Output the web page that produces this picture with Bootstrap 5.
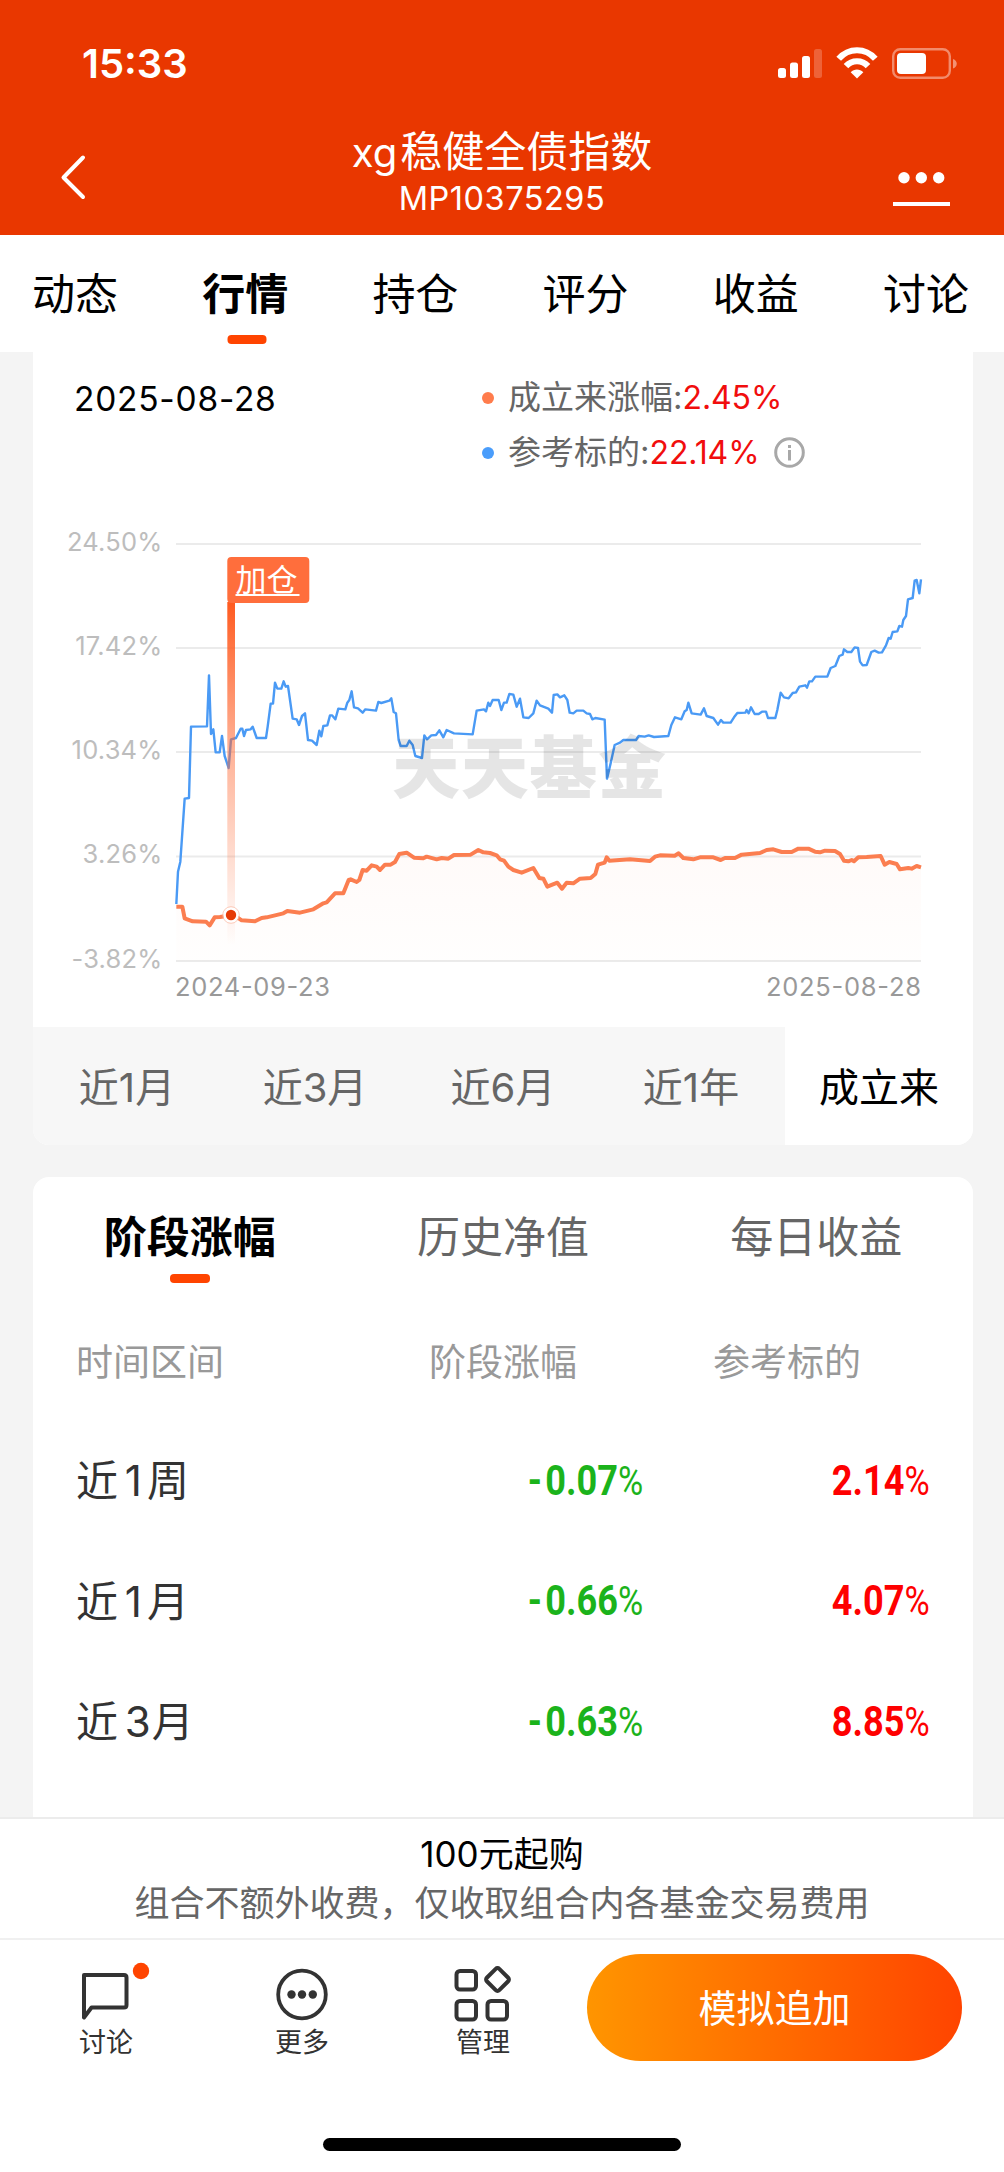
<!DOCTYPE html>
<html lang="zh-CN">
<head>
<meta charset="utf-8">
<meta name="viewport" content="width=device-width, initial-scale=1">
<title>xg稳健全债指数</title>
<link rel="stylesheet" href="https://cdn.jsdelivr.net/npm/bootstrap@5.3.0/dist/css/bootstrap.min.css">
<style>
body{font-family:Inter,"Noto Sans CJK SC",sans-serif;background:#f4f4f4;color:#000;line-height:1;width:1004px;height:2172px;overflow:hidden}
svg text{font-family:Inter,"Noto Sans CJK SC",sans-serif}
.app{height:2172px}
.topbar{height:235px;background:#e93700;color:#fff}
.statusbar{height:127px;padding:0 47px 0 82px}
.clock{font-size:40px;font-weight:600;line-height:128px}
.titlebar{height:108px;padding:0 54px 0 60px}
.fund-name{font-size:42px;line-height:50px}
.fund-name span{font-size:40px;margin-right:3px}
.fund-code{font-size:32.5px;line-height:38px;padding-top:2px;letter-spacing:.5px}
.maintabs{height:117px;padding:0 35px 0 32px;font-size:43px}
.tab-item{height:100%;line-height:118px;position:relative;white-space:nowrap}
.tab-on{font-weight:700}
.tab-on::after{content:"";position:absolute;left:50%;bottom:8px;width:39px;height:9px;border-radius:4px;background:#ff4400;transform:translateX(-50%)}
.maintabs .tab-on::after{margin-left:2px}
.content-area{height:1465px;padding:0 31px 0 33px;overflow:hidden}
.chart-card{height:793px;border-radius:0 0 16px 16px;overflow:hidden}
.chart-head{height:158px;padding:18px 40px 0 41px}
.cur-date{font-size:33.5px;line-height:58px;width:408px;letter-spacing:.75px}
.legend-row{height:55px;font-size:33px;color:#666}
.legend-row b{font-weight:400;color:#f10d0d;font-size:32px;letter-spacing:-.1px}
.legend-dot{width:12px;height:12px;border-radius:50%;margin-right:14px}
.dot-fund{background:#ff7c4c}.dot-ref{background:#4a9dfb}
.range-bar{height:118px;font-size:40px;color:#666;background:#f7f7f7;line-height:121px}
.range-on{background:#fff;color:#000}
.table-card{height:660px;margin-top:32px;border-radius:16px 16px 0 0}
.subtabs{height:120px;font-size:43px;color:#666}
.subtabs .tab-item{line-height:120px}
.subtabs .tab-on{color:#000}
.subtabs .tab-on::after{bottom:14px;width:40px}
.stage-head{height:124px;font-size:37px;color:#999;padding:6px 44px 0 43px}
.stage-row{height:120.5px;font-size:42px;color:#333;padding:0 44px 0 43px;word-spacing:-5px}
.day-num{letter-spacing:5px}
.day-wide{letter-spacing:1px}
.c-one{width:353px}.c-two{width:284px}
.stage-row .c-two{width:213px;text-align:right}
.rate{display:inline-block;font-family:Roboto,Inter,sans-serif;font-size:42px;line-height:52px;font-weight:700;transform:scaleX(.86);transform-origin:100% 50%;white-space:nowrap}
.minus{letter-spacing:4px}
.pct{font-weight:400;font-size:40px;letter-spacing:-1px}
.up{color:#fe0000}.down{color:#1bb31b}
.notice{height:121px;background:#fff;border-top:2px solid #ececec;font-size:35px;line-height:50px;padding-top:10px}
.notice-sub{color:#666;line-height:48px}
.actionbar{height:234px;background:#fff;border-top:2px solid #f0f0f0}
.act-row{height:138px;padding:14px 42px 0 60px}
.act{width:92px;color:#333;font-size:27px}
.act svg{display:block;margin:8px auto -1px}
.buy{width:375px;height:107px;border-radius:54px;border:0;background:linear-gradient(90deg,#ff9500,#ff4400);color:#fff;font-size:38px}
.homebar{width:358px;height:13px;border-radius:7px;background:#000;margin:60px auto 0}
</style>
<script src="https://cdn.jsdelivr.net/npm/bootstrap@5.3.0/dist/js/bootstrap.bundle.min.js"></script>
</head>
<body>
<div class="app d-flex flex-column">
<header class="topbar">
  <div class="statusbar d-flex justify-content-between">
    <div class="clock">15:33</div>
    <svg width="180" height="40" viewBox="777 43 180 40" style="margin-top:43px" fill="#fff">
      <rect x="778" y="68" width="8" height="10" rx="2.5"/><rect x="790" y="62.500" width="8" height="15.500" rx="2.500"/><rect x="802" y="56" width="8" height="22" rx="2.500"/><rect x="814" y="49" width="8" height="29" rx="2.500" opacity=".22"/>
      <g fill="none" stroke="#fff" stroke-width="6.200"><path d="M838.700 58.800c10-11.400 26.600-11.400 36.600 0M846 66.200c6-6.600 16-6.600 22 0"/></g>
      <path d="M850.700 72.200c3.500-3.600 9-3.600 12.600 0L857 78.400z"/>
      <rect x="893.200" y="49.200" width="56.600" height="28.600" rx="7" fill="none" stroke="#fff" stroke-width="2.400" opacity=".42"/><rect x="897" y="53" width="29" height="21" rx="4"/><path d="M953 59c5 1.500 5 8 0 9.500z" opacity=".45"/>
    </svg>
  </div>
  <div class="titlebar d-flex justify-content-between">
    <svg width="54" height="50" viewBox="60 152 54 50" style="margin-top:25px" fill="none" stroke="#fff" stroke-width="4" stroke-linecap="round" stroke-linejoin="round"><path d="M83 157.500 63.500 177.500l19.500 19.500"/></svg>
    <div class="text-center"><div class="fund-name"><span>xg</span>稳健全债指数</div><div class="fund-code">MP10375295</div></div>
    <svg width="60" height="40" viewBox="890 168 60 40" style="margin-top:41px" fill="#fff"><circle cx="904" cy="177.700" r="5.700"/><circle cx="921.300" cy="177.700" r="5.700"/><circle cx="938.700" cy="177.700" r="5.700"/><rect x="893" y="202" width="57" height="4"/></svg>
  </div>
</header>
<nav class="maintabs bg-white d-flex justify-content-between">
  <div class="tab-item">动态</div><div class="tab-item tab-on">行情</div><div class="tab-item">持仓</div><div class="tab-item">评分</div><div class="tab-item">收益</div><div class="tab-item">讨论</div>
</nav>
<main class="content-area">
  <section class="chart-card bg-white">
    <div class="chart-head d-flex">
      <div class="cur-date">2025-08-28</div>
      <div>
        <div class="legend-row d-flex align-items-center"><i class="legend-dot dot-fund"></i>成立来涨幅:<b>2.45%</b></div>
        <div class="legend-row d-flex align-items-center"><i class="legend-dot dot-ref"></i>参考标的:<b>22.14%</b>
          <svg width="31" height="31" viewBox="0 0 31 31" style="margin-left:14px" fill="none" stroke="#a8a8a8" stroke-width="3"><circle cx="15.500" cy="15.500" r="13.800"/><path d="M15.500 13v10.500M15.500 8v3"/></svg></div>
      </div>
    </div>
    <svg class="d-block" width="940" height="517" viewBox="33 510 940 517">
      <defs>
        <linearGradient id="pole" x1="0" y1="0" x2="0" y2="1"><stop offset="0" stop-color="#ff5a1f"/><stop offset=".45" stop-color="#ff6a35" stop-opacity=".5"/><stop offset="1" stop-color="#ff6a35" stop-opacity="0"/></linearGradient>
        <linearGradient id="area" x1="0" y1="0" x2="0" y2="1"><stop offset="0" stop-color="#ff7c4c" stop-opacity=".035"/><stop offset="1" stop-color="#ff7c4c" stop-opacity=".008"/></linearGradient>
      </defs>
      <path d="M176 544H921M176 648H921M176 752H921M176 856.500H921M176 961H921" stroke="#ebebeb" stroke-width="2"/>
      <g font-size="25.500" fill="#bdbdbd" text-anchor="end" letter-spacing=".2">
        <text x="162.500" y="550.500">24.50%</text><text x="162.500" y="654.500">17.42%</text><text x="162.500" y="759">10.34%</text><text x="162.500" y="863">3.26%</text><text x="162.500" y="967.500">-3.82%</text>
      </g>
      <g font-size="25.500" fill="#999"><text x="175" y="996" textLength="155">2024-09-23</text><text x="766" y="996" textLength="155">2025-08-28</text></g>
      <g transform="translate(150 520) scale(.33333)" fill="none" stroke-linejoin="round">
        <path fill="url(#area)" d="M79 1160 97 1160 104 1195 168 1205 243 1186 315 1204 412 1173 450 1178 520 1150 580 1120 638 1050 722 1034 748 1002 820 1015 895 1016 985 990 1040 1006 1115 1058 1150 1044 1236 1106 1322 1074 1364 1028 1586 1000 1712 1020 1870 988 2055 993 2082 1022 2192 1008 2250 1048 2313 1042V1323H79z"/>
        <polyline stroke="#4a9af5" stroke-width="7.200" points="79,1152 84,1055 91,1025 104,836 117,834 123,620 171,619 177,466 183,642 190,628 197,697 209,697 216,648 224,708 236,744 243,658 258,654 272,626 277,626 282,648 288,630 302,628 308,620 320,654 348,654 353,620 362,551 369,551 375,488 382,506 394,506 401,484 407,500 414,498 428,596 440,598 447,615 456,588 465,580 474,660 486,662 500,675 508,632 514,649 520,618 532,616 540,586 546,586 556,598 565,566 586,568 592,548 598,540 605,514 612,562 624,565 638,578 646,568 678,572 685,546 694,549 718,542 724,535 731,576 738,580 746,660 752,678 770,678 778,662 788,675 796,708 816,714 823,646 831,658 844,646 858,645 868,631 880,652 890,630 912,640 968,643 980,572 1002,568 1008,574 1015,548 1020,558 1028,540 1046,540 1054,570 1062,548 1070,548 1078,522 1090,524 1100,560 1110,536 1120,592 1136,594 1150,580 1160,542 1170,556 1195,566 1206,578 1211,525 1222,523 1230,532 1243,526 1252,540 1259,578 1270,580 1280,572 1300,572 1310,580 1320,582 1327,598 1336,594 1364,599 1371,776 1382,730 1394,675 1410,668 1420,660 1458,660 1466,648 1484,650 1496,646 1512,651 1555,648 1564,615 1575,592 1594,598 1604,574 1610,570 1615,548 1625,580 1652,584 1662,565 1670,588 1690,594 1704,614 1713,600 1720,608 1742,608 1752,592 1762,579 1786,578 1790,570 1796,580 1803,562 1814,582 1826,582 1836,575 1848,575 1854,594 1876,594 1882,570 1892,518 1902,532 1916,535 1928,519 1938,517 1948,500 1966,496 1971,503 1978,484 1986,484 1996,470 2032,470 2042,444 2056,438 2068,408 2078,404 2082,388 2092,396 2104,396 2114,382 2124,384 2130,425 2138,436 2150,435 2164,396 2174,392 2186,398 2196,397 2208,376 2216,354 2222,356 2228,336 2242,334 2248,318 2256,320 2260,300 2268,288 2274,238 2288,234 2294,182 2300,180 2308,220 2313,178"/>
        <polyline stroke="#fb7e50" stroke-width="12" points="79,1160 97,1160 104,1195 128,1204 168,1205 179,1216 194,1192 210,1191 243,1186 262,1192 275,1201 315,1204 335,1194 350,1192 400,1180 412,1173 450,1178 490,1168 520,1150 530,1147 555,1120 580,1120 596,1080 602,1078 620,1086 628,1080 638,1050 650,1052 665,1036 680,1040 690,1050 705,1034 722,1034 735,1026 748,1002 770,998 792,1013 820,1015 830,1010 860,1018 875,1014 895,1016 912,1005 962,1004 985,990 1000,997 1020,999 1040,1006 1050,1018 1062,1022 1075,1040 1090,1050 1115,1058 1150,1044 1168,1074 1180,1076 1192,1100 1222,1088 1236,1106 1250,1088 1270,1090 1290,1076 1322,1074 1336,1062 1344,1034 1364,1028 1370,1012 1378,1022 1440,1018 1500,1023 1515,1010 1530,1006 1574,1007 1586,1000 1600,1014 1630,1018 1650,1012 1690,1012 1712,1020 1725,1014 1755,1014 1775,1004 1830,999 1850,990 1870,988 1895,996 1925,996 1945,986 1975,986 1995,995 2010,997 2025,992 2055,993 2070,1002 2082,1022 2095,1024 2105,1020 2112,1024 2125,1012 2150,1011 2192,1008 2204,1034 2218,1026 2240,1032 2250,1048 2275,1044 2285,1046 2300,1038 2313,1042"/>
      </g>
      <text x="392" y="793" font-size="68" font-weight="900" fill="#000" fill-opacity=".1" textLength="274">天天基金</text>
      <rect x="227.300" y="602" width="7.700" height="343" fill="url(#pole)"/>
      <rect x="227.300" y="557" width="82" height="46" rx="4" fill="#ff6e3c"/>
      <text x="235.500" y="590.500" font-size="31" fill="#fff" textLength="62">加仓</text><rect x="235.500" y="594" width="64" height="2" fill="#fff"/>
      <circle cx="231" cy="915" r="7.800" fill="#fff"/><circle cx="231" cy="915" r="8.300" fill="none" stroke="#fbb9a2" stroke-width=".7"/><circle cx="231" cy="915" r="5.200" fill="#e63b06"/>
    </svg>
    <div class="range-bar d-flex text-center">
      <div class="flex-fill w-100">近1月</div><div class="flex-fill w-100">近3月</div><div class="flex-fill w-100">近6月</div><div class="flex-fill w-100">近1年</div><div class="flex-fill w-100 range-on">成立来</div>
    </div>
  </section>
  <section class="table-card bg-white">
    <div class="subtabs row g-0 text-center">
      <div class="col-4 tab-item tab-on">阶段涨幅</div><div class="col-4 tab-item">历史净值</div><div class="col-4 tab-item">每日收益</div>
    </div>
    <div class="stage-head d-flex align-items-center"><div class="c-one">时间区间</div><div class="c-two">阶段涨幅</div><div>参考标的</div></div>
    <div class="stage-row d-flex align-items-center"><div class="c-one">近 <span class="day-num">1</span>周</div>
      <div class="c-two"><span class="rate down"><span class="minus">-</span>0.07<span class="pct">%</span></span></div>
      <div class="ms-auto"><span class="rate up">2.14<span class="pct">%</span></span></div></div>
    <div class="stage-row d-flex align-items-center"><div class="c-one">近 <span class="day-num">1</span>月</div>
      <div class="c-two"><span class="rate down"><span class="minus">-</span>0.66<span class="pct">%</span></span></div>
      <div class="ms-auto"><span class="rate up">4.07<span class="pct">%</span></span></div></div>
    <div class="stage-row d-flex align-items-center"><div class="c-one">近 <span class="day-wide">3</span>月</div>
      <div class="c-two"><span class="rate down"><span class="minus">-</span>0.63<span class="pct">%</span></span></div>
      <div class="ms-auto"><span class="rate up">8.85<span class="pct">%</span></span></div></div>
  </section>
</main>
<div class="notice text-center"><div>100元起购</div><div class="notice-sub">组合不额外收费，仅收取组合内各基金交易费用</div></div>
<footer class="actionbar">
  <div class="act-row d-flex">
    <div class="act text-center"><svg width="92" height="68" viewBox="60 1960 92 68"><path d="M84 1973h40q2.500 0 2.500 2.500v27.500q0 2.500-2.500 2.500H91.500L84 2015.500z" fill="none" stroke="#333" stroke-width="4" stroke-linejoin="round"/><circle cx="141" cy="1969" r="8.200" fill="#ff4400"/></svg>讨论</div>
    <div class="act text-center" style="margin-left:104px"><svg width="92" height="68" viewBox="256 1962 92 68"><circle cx="302" cy="1994.500" r="23.800" fill="none" stroke="#333" stroke-width="3.800"/><g fill="#333"><circle cx="291.500" cy="1994.500" r="4.200"/><circle cx="302" cy="1994.500" r="4.200"/><circle cx="312.800" cy="1994.500" r="4.200"/></g></svg>更多</div>
    <div class="act text-center" style="margin-left:89px"><svg width="92" height="68" viewBox="437 1962 92 68" fill="none" stroke="#333" stroke-width="4"><rect x="456.500" y="1971" width="19.500" height="18.500" rx="3.500"/><rect x="456.500" y="2001" width="19.500" height="18.500" rx="3.500"/><rect x="487.500" y="2001" width="19.500" height="18.500" rx="3.500"/><rect x="488.700" y="1970.700" width="17.600" height="17.600" rx="2.500" transform="rotate(45 497.500 1979.500)"/></svg>管理</div>
    <button class="buy ms-auto p-0">模拟追加</button>
  </div>
  <div class="homebar"></div>
</footer>
</div>
</body>
</html>
